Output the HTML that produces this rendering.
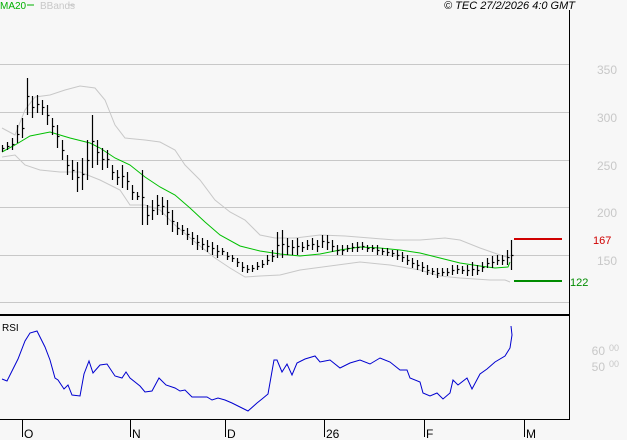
<!DOCTYPE html><html><head><meta charset="utf-8"><style>
body{margin:0;background:#f7f7f7;width:627px;height:440px;overflow:hidden;font-family:"Liberation Sans",sans-serif}
svg{position:absolute;left:0;top:0}
</style></head><body>
<svg id="s" width="627" height="440" xmlns="http://www.w3.org/2000/svg" font-family="Liberation Sans, sans-serif">
<rect width="627" height="440" fill="#f7f7f7"/>
<g stroke="#c8c8c8" stroke-width="1">
<line x1="0" y1="64.5" x2="569" y2="64.5"/><line x1="0" y1="112.5" x2="569" y2="112.5"/>
<line x1="0" y1="160.5" x2="569" y2="160.5"/><line x1="0" y1="207.5" x2="569" y2="207.5"/>
<line x1="0" y1="255.5" x2="569" y2="255.5"/><line x1="0" y1="302.5" x2="569" y2="302.5"/>
</g>
<g fill="#c8c8c8" font-size="12" text-anchor="end">
<text x="617" y="74">350</text><text x="617" y="122">300</text><text x="617" y="170">250</text>
<text x="617" y="217">200</text><text x="617" y="265">150</text>
<text x="605" y="355">60</text><text x="619" y="351" font-size="9">00</text>
<text x="605" y="371">50</text><text x="619" y="367" font-size="9">00</text>
</g>
<line x1="569.5" y1="10" x2="569.5" y2="420" stroke="#000"/>
<line x1="0" y1="315" x2="570" y2="315" stroke="#000" stroke-width="2"/>
<line x1="0" y1="419.5" x2="570" y2="419.5" stroke="#000"/>
<g stroke="#000"><line x1="22.5" y1="420" x2="22.5" y2="437"/><line x1="130.5" y1="420" x2="130.5" y2="437"/><line x1="225.5" y1="420" x2="225.5" y2="437"/><line x1="324.5" y1="420" x2="324.5" y2="437"/><line x1="424.5" y1="420" x2="424.5" y2="437"/><line x1="524.5" y1="420" x2="524.5" y2="437"/></g>
<g font-size="12" fill="#000"><text x="24" y="438">O</text><text x="132" y="438">N</text><text x="227" y="438">D</text><text x="326" y="438">26</text><text x="426" y="438">F</text><text x="526" y="438">M</text></g>
<text x="0" y="9" font-size="10" fill="#00b000">MA20</text><line x1="27" y1="5" x2="34" y2="5" stroke="#00b000"/>
<text x="40" y="9" font-size="10" fill="#c8c8c8">BBands</text><line x1="68" y1="5" x2="75" y2="5" stroke="#c8c8c8"/>
<text x="575" y="9" font-size="11" font-style="italic" text-anchor="end" fill="#000">© TEC 27/2/2026 4:0 GMT</text>
<text x="2" y="331" font-size="10" fill="#000">RSI</text>
<polyline fill="none" stroke="#c8c8c8" points="2,128 15,135 25,110 35,97 50,95 65,90 80,86 95,88 105,100 115,125 125,138 145,140 160,142 175,150 185,165 200,180 215,200 230,212 245,220 260,235 275,238 295,238 320,235 345,236 370,238 395,240 420,240 445,238 460,240 480,248 500,255 510,258"/>
<polyline fill="none" stroke="#c8c8c8" points="2,157 15,155 25,165 40,170 60,172 80,172 100,180 120,190 130,205 145,205 160,210 175,225 195,242 215,258 230,268 245,277 260,276 280,275 300,270 330,266 360,262 390,265 420,270 440,276 460,278 490,280 505,280 510,282"/>
<polyline fill="none" stroke="#00c000" points="2,152 15,145 30,136 50,132 70,138 90,143 100,148 115,158 130,165 145,177 160,187 175,195 190,208 205,222 220,235 240,246 260,251 280,254 300,256 320,254 340,250 360,247 380,248 400,250 420,253 440,258 460,263 480,266 495,268 508,267 510,262"/>
<g id="bars" stroke="#000" stroke-width="1.2"></g>
<line x1="514" y1="239" x2="562" y2="239" stroke="#d00000" stroke-width="2"/>
<line x1="514" y1="281" x2="562" y2="281" stroke="#008c00" stroke-width="2"/>
<text x="593" y="244" font-size="11" fill="#d00000">167</text>
<text x="570" y="286" font-size="11" fill="#008c00">122</text>
<polyline fill="none" stroke="#0000d0" points="2,379 7,381 12,371 18,359 25,341 30,333 37,331 45,347 50,360 55,378 58,380 64,389 68,385 72,395 80,396 84,374 89,361 93,373 100,365 107,364 115,376 122,378 126,372 130,378 140,386 145,392 152,391 159,378 166,385 175,388 180,391 185,390 192,397 200,397 207,397 212,400 218,398 225,400 232,403 240,407 248,411 257,403 262,399 268,394 274,360 277,360 282,372 287,364 292,375 297,363 305,359 315,356 320,362 325,361 330,360 340,368 350,363 360,360 370,364 380,358 390,362 400,370 407,370 410,378 420,382 423,393 430,396 437,393 443,399 450,393 453,380 458,385 467,378 472,389 480,374 487,369 495,362 505,356 510,348 512,335 511,326"/>
</svg>
<script>
var d=[[2,145,152],[7,142,150],[12,138,150],[17,125,143],[22,118,138],[27,78,115],[32,96,118],[37,95,113],[42,100,115],[47,105,125],[52,118,135],[57,125,148],[62,140,160],[67,155,175],[72,160,180],[77,162,192],[82,158,190],[87,140,180],[92,115,168],[97,140,165],[102,148,170],[107,150,168],[112,165,180],[117,170,185],[122,165,188],[127,172,190],[132,185,200],[137,192,200],[142,170,225],[147,205,225],[152,200,220],[157,195,215],[162,197,215],[167,200,225],[172,210,232],[177,222,235],[182,225,235],[187,228,240],[192,232,245],[197,235,250],[202,238,250],[207,240,252],[212,242,255],[217,245,258],[222,248,255],[227,252,260],[232,255,262],[237,258,267],[242,262,272],[247,265,273],[252,265,272],[257,262,270],[262,260,268],[267,255,265],[272,250,262],[277,232,258],[282,230,258],[287,238,255],[292,240,255],[297,238,255],[302,242,252],[307,240,250],[312,238,250],[317,240,252],[322,235,248],[327,235,250],[332,240,252],[337,245,255],[342,245,255],[347,245,252],[352,243,252],[357,242,252],[362,242,250],[367,245,252],[372,245,252],[377,245,255],[382,248,255],[387,248,256],[392,250,257],[397,250,260],[402,252,262],[407,255,265],[412,258,268],[417,260,270],[422,262,272],[427,265,275],[432,268,275],[437,268,278],[442,268,276],[447,268,276],[452,265,275],[457,265,274],[462,266,274],[467,265,276],[472,262,276],[477,265,275],[482,262,272],[487,258,268],[492,256,268],[497,255,265],[502,255,265],[507,250,265],[511,240,270]];
var g=document.getElementById('bars'),h='';
d.forEach(function(b,i){var x=b[0]+.5,c=((b[1]+b[2])/2)|0;h+='<line x1="'+x+'" y1="'+b[1]+'" x2="'+x+'" y2="'+b[2]+'"/><line x1="'+x+'" y1="'+c+'.5" x2="'+(x+2)+'" y2="'+c+'.5"/>';});
g.innerHTML=h;
</script>
</body></html>
